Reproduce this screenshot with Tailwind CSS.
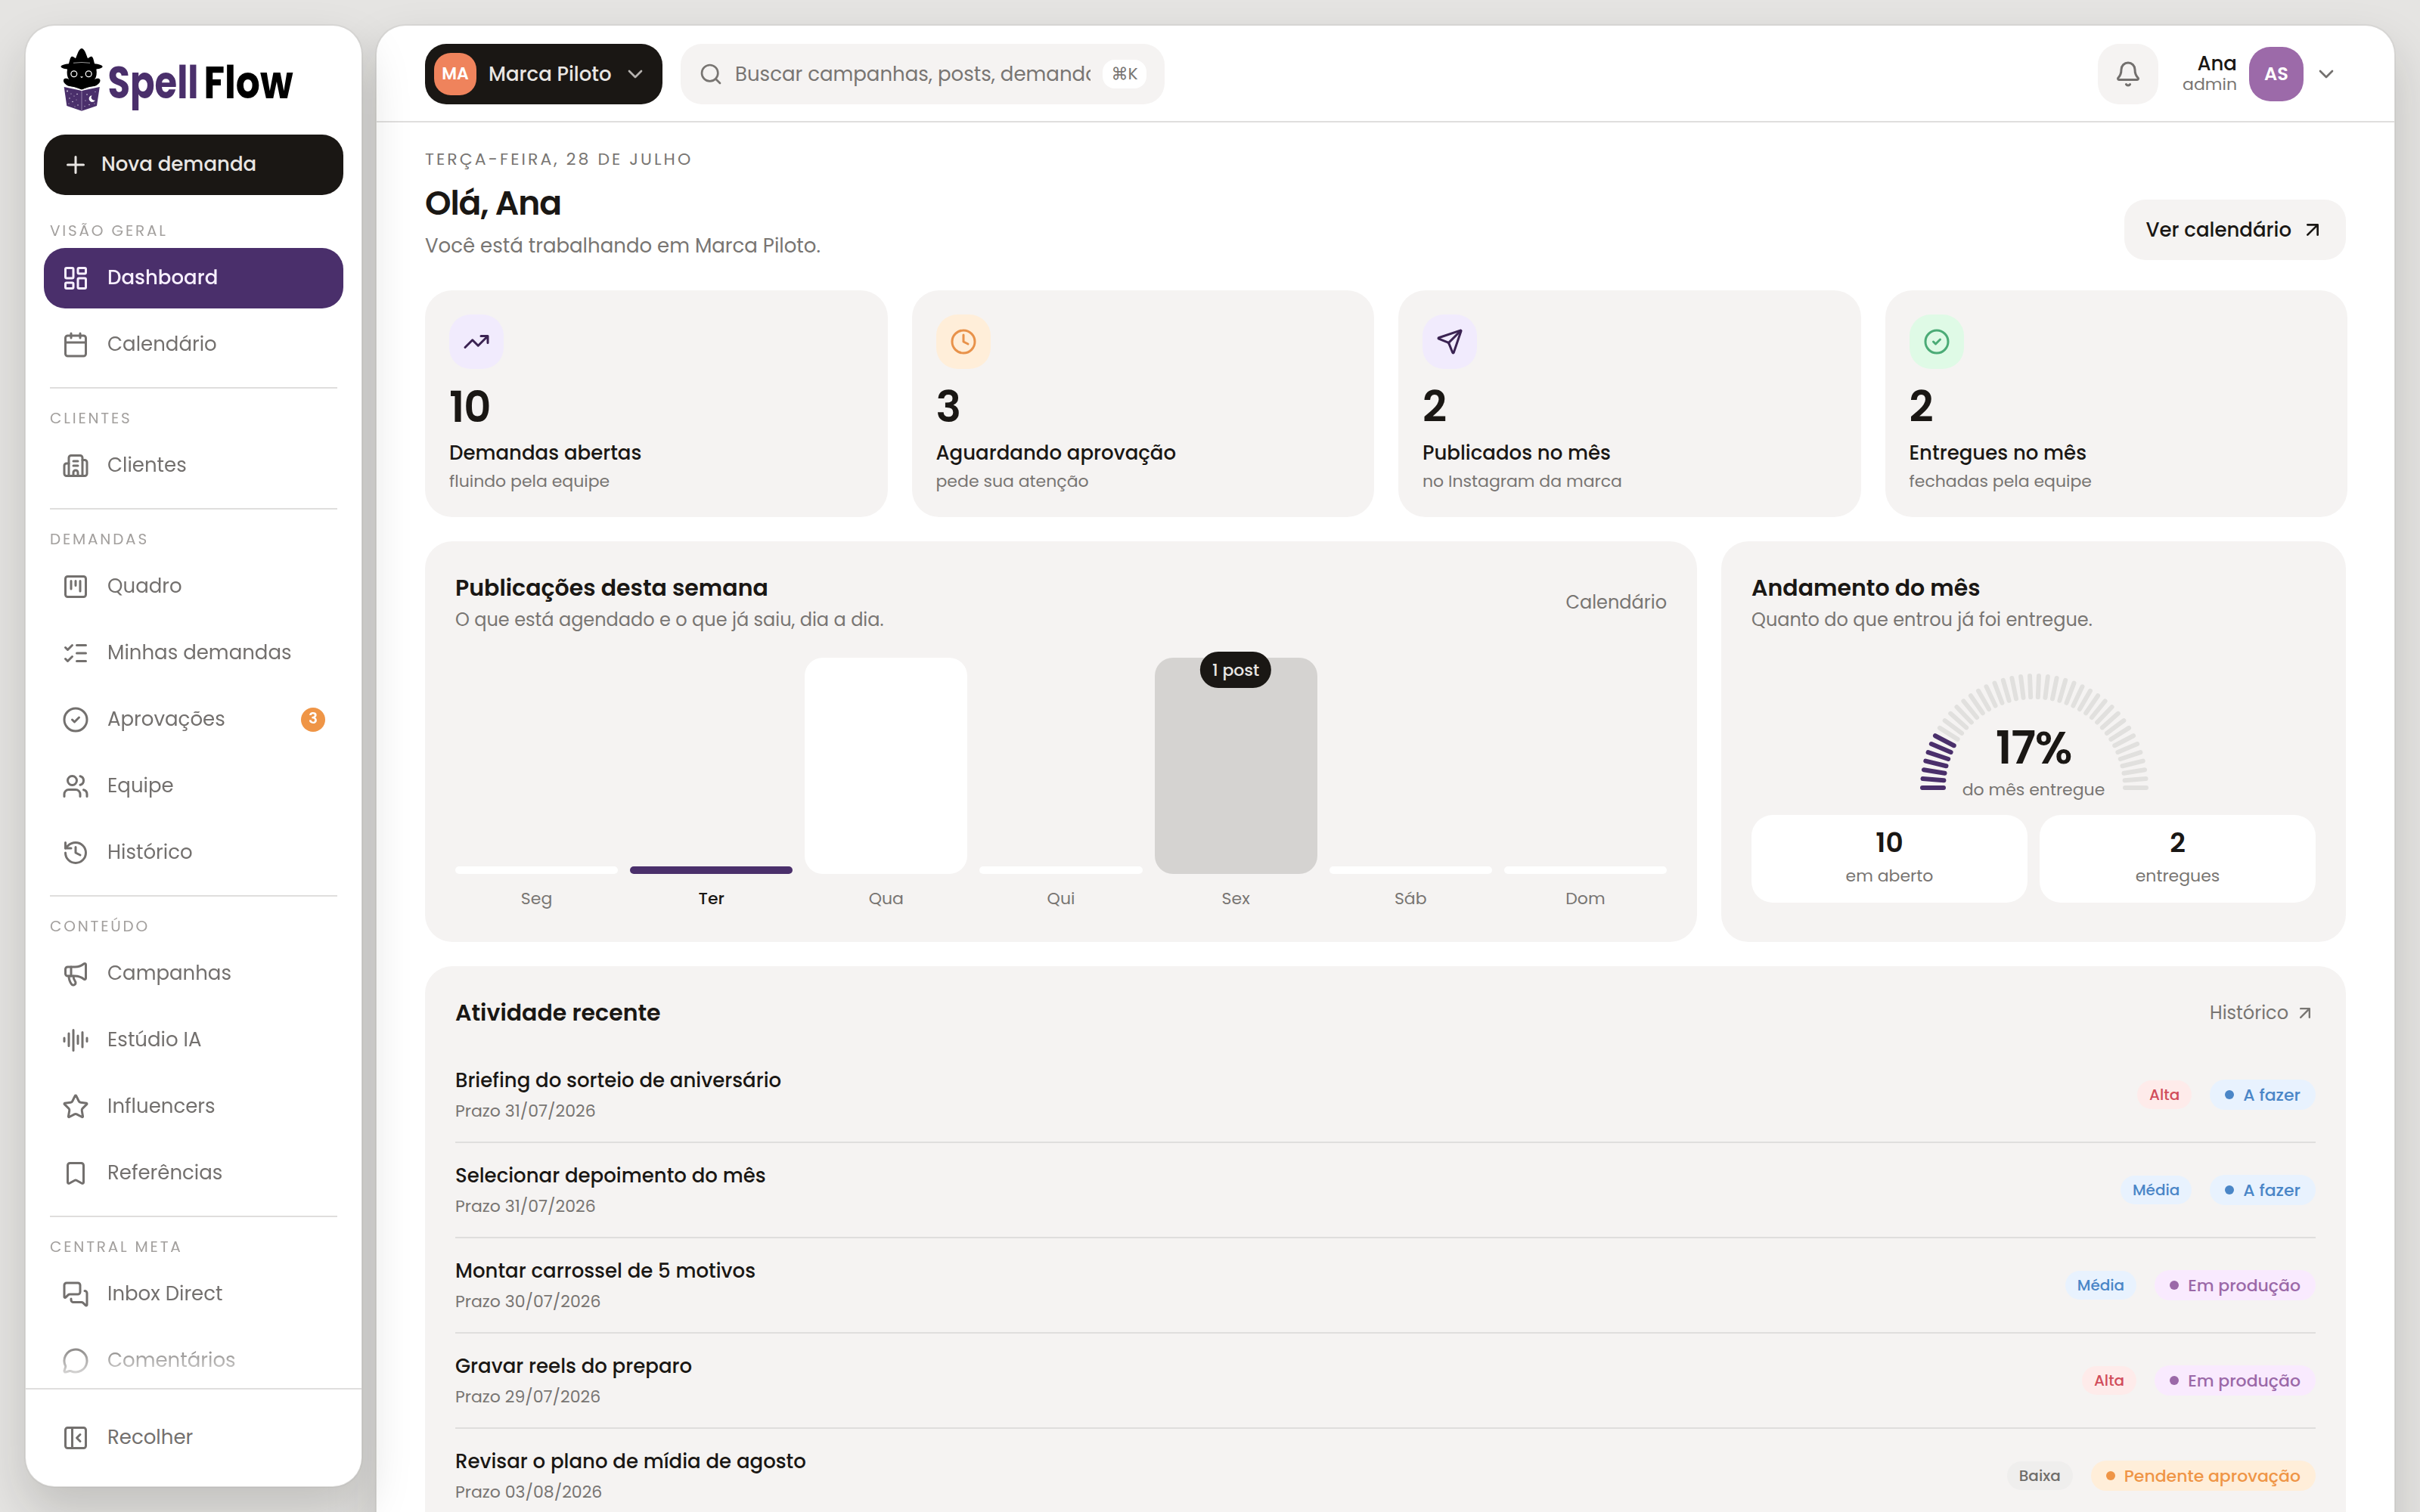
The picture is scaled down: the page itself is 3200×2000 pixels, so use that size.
<!DOCTYPE html>
<html lang="pt-BR">
<head>
    <meta charset="UTF-8">
    <meta name="viewport" content="width=device-width, initial-scale=1.0">
    <title>Spell Flow - Dashboard</title>
    <script src="https://cdn.jsdelivr.net/npm/@tailwindcss/browser@4"></script>
    <style>
        body { font-family: Poppins, Inter, sans-serif; }
        svg.icon { fill: none; stroke: currentColor; stroke-width: 2; stroke-linecap: round; stroke-linejoin: round; flex-shrink: 0; }
        /* labels sit a pixel above the icon centre */
        aside a, aside button { padding-bottom: 2px; }
        aside a svg.icon, aside button svg.icon { margin-top: 2px; }
    </style>
</head>
<body class="bg-[#e5e4e2] text-[#1a1714] text-[26px] leading-[39px] h-[2000px] overflow-hidden">
<div class="flex gap-4 h-[2000px] px-8 pt-8 overflow-hidden">

    <!-- Sidebar -->
    <aside class="relative z-10 w-[448px] h-[1936px] shrink-0 flex flex-col bg-white bg-clip-padding border-2 border-[#1a1714]/5 rounded-[40px] overflow-hidden shadow-[0_32px_64px_rgba(26,23,20,0.17)]">
        <div class="px-6 pt-[26px] shrink-0">
            <svg class="block ml-5 h-[94px] w-[340px]" viewBox="78 60 340 94">
                <path d="M80.500 88c0-1.800 5-3.300 10.500-3.800 1-3.500 1.800-8 3.400-9.300 1.800-1 4 1 5.600 2.300 1.900-3.700 4-13 8-13.200 4.200.2 6.300 9.500 8.100 13.200 1.700-1.300 3.800-3.300 5.600-2.300 1.700 1.300 2.400 5.800 3.400 9.300 5.500.5 10.500 2 10.500 3.800 0 2-4 3-8.200 3.600.9 5.600.3 10.400-2.400 13.600 2.600-1.600 5.800-2 7.100-.2 1.900 3.400-3.100 8.100-8.100 9.500-5.200 1.600-10.500 2-15.800 4.300-5.300-2.300-10.600-2.700-15.800-4.300-5-1.400-10-6.100-8.100-9.500 1.300-1.800 4.500-1.400 7.100.2-2.700-3.200-3.300-8-2.400-13.600-4.300-.6-8.500-1.600-8.500-3.600z" fill="#000"/>
                <path d="M97 83.300q11-1.600 22 0" stroke="#999" stroke-width="1" fill="none"/>
                <circle cx="97.800" cy="97.700" r="3.900" fill="none" stroke="#fff" stroke-width="1.300"/>
                <circle cx="117.200" cy="97.700" r="3.900" fill="none" stroke="#fff" stroke-width="1.300"/>
                <path d="M106 101.300h4l-2 1.900z" fill="#fff"/>
                <path d="M84.700 115l23.300 5 23.800-5-3.800 25-20 6.800-19.700-6.800z" fill="#4a2f6b"/>
                <path d="M86 114.300q14 .5 22 5.200 8-4.700 22-5.200" fill="none" stroke="#fff" stroke-width="1.100"/>
                <path d="M108 120v26.500" stroke="#9d8ab3" stroke-width=".9"/>
                <path d="M121.500 126.300a4.300 4.300 0 1 0 4.300 6.200 4 4 0 0 1-4.300-6.200z" fill="#fff"/>
                <g fill="#e3dcec">
                    <circle cx="89" cy="120.500" r=".9"/><circle cx="94" cy="124" r=".6"/><circle cx="92" cy="130" r=".7"/><circle cx="98" cy="127" r=".6"/>
                    <circle cx="102" cy="124.500" r=".8"/><circle cx="96" cy="134.500" r=".8"/><circle cx="101" cy="132" r=".5"/><circle cx="103" cy="139" r=".7"/>
                    <circle cx="91" cy="137" r=".6"/><circle cx="115" cy="125" r=".8"/><circle cx="113" cy="133" r=".6"/><circle cx="118" cy="138.500" r=".7"/>
                    <circle cx="125" cy="137" r=".6"/><circle cx="126" cy="121.500" r=".6"/><circle cx="112" cy="140.500" r=".6"/><circle cx="99" cy="141" r=".5"/>
                </g>
                <g font-family="Poppins, Inter, sans-serif" font-weight="700" font-size="59">
                    <text x="142.500" y="130" textLength="120" lengthAdjust="spacingAndGlyphs" fill="#4a2f6b">Spell</text>
                    <text x="269.500" y="130" textLength="118" lengthAdjust="spacingAndGlyphs" fill="#000">Flow</text>
                </g>
            </svg>
            <button class="mt-[24px] flex items-center gap-4 w-full h-20 px-6 rounded-[28px] bg-[#1a1714] text-[#e9e6e3] font-medium">
                <svg class="icon size-9" viewBox="0 0 24 24"><path d="M5 12h14M12 5v14"/></svg>
                <span>Nova demanda</span>
            </button>
        </div>

        <nav class="flex-1 min-h-0 overflow-hidden px-6 pt-8 text-[#73706e] [mask-image:linear-gradient(to_bottom,black_calc(100%-64px),transparent)]">
            <p class="px-2 pb-2 text-[20px] leading-[30px] tracking-[0.14em] text-[#a3a09e]">VISÃO GERAL</p>
            <div class="flex flex-col gap-2">
                <a class="flex items-center gap-6 h-20 px-6 rounded-[28px] bg-[#4a2f6b] text-[#f7effe] font-medium">
                    <svg class="icon size-9" viewBox="0 0 24 24"><rect width="7" height="9" x="3" y="3" rx="1"/><rect width="7" height="5" x="14" y="3" rx="1"/><rect width="7" height="9" x="14" y="12" rx="1"/><rect width="7" height="5" x="3" y="16" rx="1"/></svg>
                    Dashboard
                </a>
                <a class="flex items-center gap-6 h-20 px-6">
                    <svg class="icon size-9" viewBox="0 0 24 24"><path d="M8 2v4M16 2v4M3 10h18"/><rect width="18" height="18" x="3" y="4" rx="2"/></svg>
                    Calendário
                </a>
            </div>

            <div class="mx-2 mt-4 mb-6 h-0.5 bg-[#dfdedd]"></div>
            <p class="px-2 pb-2 text-[20px] leading-[30px] tracking-[0.14em] text-[#a3a09e]">CLIENTES</p>
            <a class="flex items-center gap-6 h-20 px-6">
                <svg class="icon size-9" viewBox="0 0 24 24"><path d="M10 12h4M10 8h4M14 21v-3a2 2 0 0 0-4 0v3M6 10H4a2 2 0 0 0-2 2v7a2 2 0 0 0 2 2h16a2 2 0 0 0 2-2V9a2 2 0 0 0-2-2h-2"/><path d="M6 21V5a2 2 0 0 1 2-2h8a2 2 0 0 1 2 2v16"/></svg>
                Clientes
            </a>

            <div class="mx-2 mt-4 mb-6 h-0.5 bg-[#dfdedd]"></div>
            <p class="px-2 pb-2 text-[20px] leading-[30px] tracking-[0.14em] text-[#a3a09e]">DEMANDAS</p>
            <div class="flex flex-col gap-2">
                <a class="flex items-center gap-6 h-20 px-6">
                    <svg class="icon size-9" viewBox="0 0 24 24"><rect width="18" height="18" x="3" y="3" rx="2"/><path d="M8 7v7M12 7v4M16 7v9"/></svg>
                    Quadro
                </a>
                <a class="flex items-center gap-6 h-20 px-6">
                    <svg class="icon size-9" viewBox="0 0 24 24"><path d="M13 5h8M13 12h8M13 19h8M3 17l2 2 4-4M3 7l2 2 4-4"/></svg>
                    Minhas demandas
                </a>
                <a class="flex items-center gap-6 h-20 px-6">
                    <svg class="icon size-9" viewBox="0 0 24 24"><circle cx="12" cy="12" r="10"/><path d="m9 12 2 2 4-4"/></svg>
                    Aprovações
                    <span class="ml-auto mt-0.5 size-8 rounded-full bg-[#ef9546] text-white text-[20px] leading-[29px] font-semibold text-center">3</span>
                </a>
                <a class="flex items-center gap-6 h-20 px-6">
                    <svg class="icon size-9" viewBox="0 0 24 24"><path d="M16 21v-2a4 4 0 0 0-4-4H6a4 4 0 0 0-4 4v2M22 21v-2a4 4 0 0 0-3-3.870M16 3.130a4 4 0 0 1 0 7.750"/><circle cx="9" cy="7" r="4"/></svg>
                    Equipe
                </a>
                <a class="flex items-center gap-6 h-20 px-6">
                    <svg class="icon size-9" viewBox="0 0 24 24"><path d="M3 12a9 9 0 1 0 9-9 9.750 9.750 0 0 0-6.740 2.740L3 8"/><path d="M3 3v5h5M12 7v5l4 2"/></svg>
                    Histórico
                </a>
            </div>

            <div class="mx-2 mt-4 mb-6 h-0.5 bg-[#dfdedd]"></div>
            <p class="px-2 pb-2 text-[20px] leading-[30px] tracking-[0.14em] text-[#a3a09e]">CONTEÚDO</p>
            <div class="flex flex-col gap-2">
                <a class="flex items-center gap-6 h-20 px-6">
                    <svg class="icon size-9" viewBox="0 0 24 24"><path d="M11 6a13 13 0 0 0 8.400-2.800A1 1 0 0 1 21 4v12a1 1 0 0 1-1.600.8A13 13 0 0 0 11 14H5a2 2 0 0 1-2-2V8a2 2 0 0 1 2-2z"/><path d="M6 14a12 12 0 0 0 2.400 7.200 2 2 0 0 0 3.200-2.400A8 8 0 0 1 10 14M8 6v8"/></svg>
                    Campanhas
                </a>
                <a class="flex items-center gap-6 h-20 px-6">
                    <svg class="icon size-9" viewBox="0 0 24 24"><path d="M2 10v3M6 6v11M10 3v18M14 8v7M18 5v13M22 10v3"/></svg>
                    Estúdio IA
                </a>
                <a class="flex items-center gap-6 h-20 px-6">
                    <svg class="icon size-9" viewBox="0 0 24 24"><path d="M11.525 2.295a.53.53 0 0 1 .95 0l2.310 4.679a2.123 2.123 0 0 0 1.595 1.160l5.166.756a.53.53 0 0 1 .294.904l-3.736 3.638a2.123 2.123 0 0 0-.611 1.878l.882 5.140a.53.53 0 0 1-.771.560l-4.618-2.428a2.122 2.122 0 0 0-1.973 0L6.396 21.010a.53.53 0 0 1-.770-.560l.881-5.139a2.122 2.122 0 0 0-.611-1.879L2.160 9.795a.53.53 0 0 1 .294-.906l5.165-.755a2.122 2.122 0 0 0 1.597-1.160z"/></svg>
                    Influencers
                </a>
                <a class="flex items-center gap-6 h-20 px-6">
                    <svg class="icon size-9" viewBox="0 0 24 24"><path d="M17 3a2 2 0 0 1 2 2v15a1 1 0 0 1-1.496.868l-4.512-2.578a2 2 0 0 0-1.984 0l-4.512 2.578A1 1 0 0 1 5 20V5a2 2 0 0 1 2-2z"/></svg>
                    Referências
                </a>
            </div>

            <div class="mx-2 mt-4 mb-6 h-0.5 bg-[#dfdedd]"></div>
            <p class="px-2 pb-2 text-[20px] leading-[30px] tracking-[0.14em] text-[#a3a09e]">CENTRAL META</p>
            <div class="flex flex-col gap-2">
                <a class="flex items-center gap-6 h-20 px-6">
                    <svg class="icon size-9" viewBox="0 0 24 24"><path d="M16 10a2 2 0 0 1-2 2H6.828a2 2 0 0 0-1.414.586l-2.202 2.202A.71.71 0 0 1 2 14.286V4a2 2 0 0 1 2-2h10a2 2 0 0 1 2 2z"/><path d="M20 9a2 2 0 0 1 2 2v10.286a.71.71 0 0 1-1.212.502l-2.202-2.202A2 2 0 0 0 17.172 19H10a2 2 0 0 1-2-2v-1"/></svg>
                    Inbox Direct
                </a>
                <a class="flex items-center gap-6 h-20 px-6">
                    <svg class="icon size-9" viewBox="0 0 24 24"><path d="M2.992 16.342a2 2 0 0 1 .094 1.167l-1.065 3.290a1 1 0 0 0 1.236 1.168l3.413-.998a2 2 0 0 1 1.099.092 10 10 0 1 0-4.777-4.719"/></svg>
                    Comentários
                </a>
            </div>
        </nav>

        <div class="shrink-0 border-t-2 border-[#dfdedd] p-6 text-[#73706e]">
            <a class="flex items-center gap-6 h-20 px-6">
                <svg class="icon size-9" viewBox="0 0 24 24"><rect width="18" height="18" x="3" y="3" rx="2"/><path d="M9 3v18M16 15l-3-3 3-3"/></svg>
                Recolher
            </a>
        </div>
    </aside>

    <!-- Main Content -->
    <main class="flex-1 min-w-0 h-[2100px] bg-white bg-clip-padding border-2 border-[#1a1714]/5 rounded-[40px] overflow-hidden shadow-[0_32px_64px_rgba(26,23,20,0.17)]">
        <!-- Top bar -->
        <header class="flex items-start h-32 px-16 pt-6 border-b-2 border-[#dfdedd]">
            <button class="flex items-center h-20 w-[314px] pl-3 pr-5 rounded-[28px] bg-[#1a1714] text-[#e9e6e3] font-medium">
                <span class="size-14 rounded-[22px] bg-[#ef835c] text-white text-[22px] leading-[56px] font-semibold text-center">MA</span>
                <span class="ml-4">Marca Piloto</span>
                <svg class="icon size-8 ml-auto text-[#b5b2af]" viewBox="0 0 24 24"><path d="m6 9 6 6 6-6"/></svg>
            </button>
            <label class="ml-6 flex items-center gap-4 h-20 w-[640px] px-6 rounded-[28px] bg-[#f5f3f2] text-[#787572]">
                <svg class="icon size-8" viewBox="0 0 24 24"><path d="m21 21-4.340-4.340"/><circle cx="11" cy="11" r="8"/></svg>
                <input class="flex-1 min-w-0 outline-none placeholder:text-[#787572]" placeholder="Buscar campanhas, posts, demandas">
                <kbd class="h-[38px] w-[58px] rounded-2xl bg-white text-[22px] leading-[38px] text-center font-[Poppins,Inter,sans-serif]">⌘K</kbd>
            </label>
            <div class="ml-auto flex items-center h-20">
                <button class="flex items-center justify-center size-20 rounded-[28px] bg-[#f5f3f2] text-[#73706e]">
                    <svg class="icon size-9" viewBox="0 0 24 24"><path d="M10.268 21a2 2 0 0 0 3.464 0"/><path d="M3.262 15.326A1 1 0 0 0 4 17h16a1 1 0 0 0 .74-1.673C19.410 13.956 18 12.499 18 8A6 6 0 0 0 6 8c0 4.499-1.411 5.956-2.738 7.326"/></svg>
                </button>
                <div class="ml-8 text-right leading-7">
                    <p class="font-medium">Ana</p>
                    <p class="text-[22px] leading-7 text-[#787572]">admin</p>
                </div>
                <span class="ml-4 size-[72px] rounded-[28px] bg-[#9c6aa9] text-white text-[24px] leading-[72px] font-semibold text-center">AS</span>
                <svg class="icon size-8 ml-3.5 mr-2.5 text-[#73706e]" viewBox="0 0 24 24"><path d="m6 9 6 6 6-6"/></svg>
            </div>
        </header>

        <div class="px-16 pt-[33px]">
            <!-- Greeting -->
            <div class="flex items-end justify-between">
                <div>
                    <p class="text-[22px] leading-8 tracking-[0.14em] text-[#787572]">TERÇA-FEIRA, 28 DE JULHO</p>
                    <h1 class="mt-3.5 text-[44px] leading-[56px] font-semibold tracking-[-0.025em]">Olá, Ana</h1>
                    <p class="mt-[9px] leading-[38px] text-[#787572]">Você está trabalhando em Marca Piloto.</p>
                </div>
                <a class="flex items-center gap-3 h-20 px-7 rounded-[28px] bg-[#f5f3f2] font-medium">
                    Ver calendário
                    <svg class="icon size-8" viewBox="0 0 24 24"><path d="M7 7h10v10M7 17 17 7"/></svg>
                </a>
            </div>

            <!-- Stat cards -->
            <div class="mt-10 -mr-0.5 grid grid-cols-4 gap-8">
                <div class="h-[300px] p-8 rounded-[36px] bg-[#f5f3f2]">
                    <div class="flex items-center justify-center size-[72px] rounded-[28px] bg-[#f1ebfd] text-[#3b2352]">
                        <svg class="icon size-9" viewBox="0 0 24 24"><path d="M16 7h6v6M22 7l-8.500 8.500-5-5L2 17"/></svg>
                    </div>
                    <p class="mt-[21px] text-[56px] leading-[60px] font-semibold tracking-[-0.02em]">10</p>
                    <p class="mt-[11px] leading-[38px] font-medium">Demandas abertas</p>
                    <p class="mt-0.5 text-[22px] leading-[33px] text-[#787572]">fluindo pela equipe</p>
                </div>
                <div class="h-[300px] p-8 rounded-[36px] bg-[#f5f3f2]">
                    <div class="flex items-center justify-center size-[72px] rounded-[28px] bg-[#ffeed9] text-[#e8924a]">
                        <svg class="icon size-9" viewBox="0 0 24 24"><circle cx="12" cy="12" r="10"/><path d="M12 6v6l4 2"/></svg>
                    </div>
                    <p class="mt-[21px] text-[56px] leading-[60px] font-semibold tracking-[-0.02em]">3</p>
                    <p class="mt-[11px] leading-[38px] font-medium">Aguardando aprovação</p>
                    <p class="mt-0.5 text-[22px] leading-[33px] text-[#787572]">pede sua atenção</p>
                </div>
                <div class="h-[300px] p-8 rounded-[36px] bg-[#f5f3f2]">
                    <div class="flex items-center justify-center size-[72px] rounded-[28px] bg-[#f1ebfd] text-[#3b2352]">
                        <svg class="icon size-9" viewBox="0 0 24 24"><path d="M14.536 21.686a.5.5 0 0 0 .937-.024l6.500-19a.496.496 0 0 0-.635-.635l-19 6.500a.5.5 0 0 0-.024.937l7.930 3.180a2 2 0 0 1 1.112 1.110z"/><path d="m21.854 2.147-10.940 10.939"/></svg>
                    </div>
                    <p class="mt-[21px] text-[56px] leading-[60px] font-semibold tracking-[-0.02em]">2</p>
                    <p class="mt-[11px] leading-[38px] font-medium">Publicados no mês</p>
                    <p class="mt-0.5 text-[22px] leading-[33px] text-[#787572]">no Instagram da marca</p>
                </div>
                <div class="h-[300px] p-8 rounded-[36px] bg-[#f5f3f2]">
                    <div class="flex items-center justify-center size-[72px] rounded-[28px] bg-[#dffae6] text-[#4bab76]">
                        <svg class="icon size-9" viewBox="0 0 24 24"><circle cx="12" cy="12" r="10"/><path d="m9 12 2 2 4-4"/></svg>
                    </div>
                    <p class="mt-[21px] text-[56px] leading-[60px] font-semibold tracking-[-0.02em]">2</p>
                    <p class="mt-[11px] leading-[38px] font-medium">Entregues no mês</p>
                    <p class="mt-0.5 text-[22px] leading-[33px] text-[#787572]">fechadas pela equipe</p>
                </div>
            </div>

            <div class="mt-8 flex gap-8 h-[530px]">
                <!-- Week chart -->
                <section class="flex-1 p-10 rounded-[36px] bg-[#f5f3f2]">
                    <div class="flex items-center justify-between">
                        <div>
                            <h2 class="text-[30px] leading-[44px] font-semibold">Publicações desta semana</h2>
                            <p class="mt-0.5 text-[24px] leading-9 text-[#787572]">O que está agendado e o que já saiu, dia a dia.</p>
                        </div>
                        <a class="text-[24px] leading-9 text-[#787572]">Calendário</a>
                    </div>
                    <div class="mt-8 grid grid-cols-7 gap-4 h-[286px] items-end">
                        <div class="h-2.5 rounded-[5px] bg-white"></div>
                        <div class="h-2.5 rounded-[5px] bg-[#4a2f6b]"></div>
                        <div class="h-full rounded-[24px] bg-white"></div>
                        <div class="h-2.5 rounded-[5px] bg-white"></div>
                        <div class="relative h-full rounded-[24px] bg-[#d5d3d1]">
                            <span class="absolute -top-2 left-1/2 -translate-x-1/2 h-12 px-4 rounded-full bg-[#1a1714] text-[#e9e6e3] text-[22px] leading-[49px] font-medium whitespace-nowrap">1 post</span>
                        </div>
                        <div class="h-2.5 rounded-[5px] bg-white"></div>
                        <div class="h-2.5 rounded-[5px] bg-white"></div>
                    </div>
                    <div class="mt-4 grid grid-cols-7 gap-4 text-center text-[22px] leading-[33px] text-[#787572]">
                        <span>Seg</span>
                        <span class="font-medium text-[#1a1714]">Ter</span>
                        <span>Qua</span>
                        <span>Qui</span>
                        <span>Sex</span>
                        <span>Sáb</span>
                        <span>Dom</span>
                    </div>
                </section>

                <!-- Month progress -->
                <section class="w-[826px] p-10 rounded-[36px] bg-[#f5f3f2]">
                    <h2 class="text-[30px] leading-[44px] font-semibold">Andamento do mês</h2>
                    <p class="mt-0.5 text-[24px] leading-9 text-[#787572]">Quanto do que entrou já foi entregue.</p>
                    <div class="mt-8 grid h-[192px] justify-items-center">
                        <svg id="gauge" class="col-start-1 row-start-1 w-80 h-[192px]" viewBox="0 0 320 192" stroke-width="6" stroke-linecap="round"></svg>
                        <div class="col-start-1 row-start-1 self-end pb-px text-center">
                            <p class="text-[60px] leading-[60px] font-semibold tracking-[-0.02em]">17%</p>
                            <p class="mt-[9px] text-[22px] leading-[33px] text-[#787572]">do mês entregue</p>
                        </div>
                    </div>
                    <div class="mt-4 grid grid-cols-2 gap-4 text-center">
                        <div class="h-[116px] pt-4 rounded-[28px] bg-white">
                            <p class="text-[36px] leading-[42px] font-semibold">10</p>
                            <p class="mt-1.5 text-[22px] leading-[33px] text-[#787572]">em aberto</p>
                        </div>
                        <div class="h-[116px] pt-4 rounded-[28px] bg-white">
                            <p class="text-[36px] leading-[42px] font-semibold">2</p>
                            <p class="mt-1.5 text-[22px] leading-[33px] text-[#787572]">entregues</p>
                        </div>
                    </div>
                </section>
            </div>

            <!-- Recent activity -->
            <section class="mt-8 p-10 rounded-[36px] bg-[#f5f3f2]">
                <div class="flex items-center justify-between">
                    <h2 class="text-[30px] leading-[44px] font-semibold">Atividade recente</h2>
                    <a class="flex items-center gap-2 text-[24px] leading-9 text-[#787572]">
                        Histórico
                        <svg class="icon size-7" viewBox="0 0 24 24"><path d="M7 7h10v10M7 17 17 7"/></svg>
                    </a>
                </div>
                <ul class="mt-6">
                    <li class="flex items-center h-[126px] border-b-2 border-[#dfdedd]">
                        <div class="mr-auto">
                            <p class="font-medium">Briefing do sorteio de aniversário</p>
                            <p class="mt-1 text-[22px] leading-[33px] text-[#787572]">Prazo 31/07/2026</p>
                        </div>
                        <span class="mr-6 px-4 rounded-full bg-[#feebea] text-[#d14d5b] text-[20px] leading-[38px] font-medium">Alta</span>
                        <span class="flex items-center gap-3 h-10 px-5 rounded-full bg-[#e8f2fe] text-[#4a86c7] text-[22px] font-medium"><i class="size-3 rounded-full bg-current"></i>A fazer</span>
                    </li>
                    <li class="flex items-center h-[126px] border-b-2 border-[#dfdedd]">
                        <div class="mr-auto">
                            <p class="font-medium">Selecionar depoimento do mês</p>
                            <p class="mt-1 text-[22px] leading-[33px] text-[#787572]">Prazo 31/07/2026</p>
                        </div>
                        <span class="mr-6 px-4 rounded-full bg-[#e8f2fe] text-[#4a86c7] text-[20px] leading-[38px] font-medium">Média</span>
                        <span class="flex items-center gap-3 h-10 px-5 rounded-full bg-[#e8f2fe] text-[#4a86c7] text-[22px] font-medium"><i class="size-3 rounded-full bg-current"></i>A fazer</span>
                    </li>
                    <li class="flex items-center h-[126px] border-b-2 border-[#dfdedd]">
                        <div class="mr-auto">
                            <p class="font-medium">Montar carrossel de 5 motivos</p>
                            <p class="mt-1 text-[22px] leading-[33px] text-[#787572]">Prazo 30/07/2026</p>
                        </div>
                        <span class="mr-6 px-4 rounded-full bg-[#e8f2fe] text-[#4a86c7] text-[20px] leading-[38px] font-medium">Média</span>
                        <span class="flex items-center gap-3 h-10 px-5 rounded-full bg-[#f9eafe] text-[#9b69a8] text-[22px] font-medium"><i class="size-3 rounded-full bg-current"></i>Em produção</span>
                    </li>
                    <li class="flex items-center h-[126px] border-b-2 border-[#dfdedd]">
                        <div class="mr-auto">
                            <p class="font-medium">Gravar reels do preparo</p>
                            <p class="mt-1 text-[22px] leading-[33px] text-[#787572]">Prazo 29/07/2026</p>
                        </div>
                        <span class="mr-6 px-4 rounded-full bg-[#feebea] text-[#d14d5b] text-[20px] leading-[38px] font-medium">Alta</span>
                        <span class="flex items-center gap-3 h-10 px-5 rounded-full bg-[#f9eafe] text-[#9b69a8] text-[22px] font-medium"><i class="size-3 rounded-full bg-current"></i>Em produção</span>
                    </li>
                    <li class="flex items-center h-[126px] border-b-2 border-[#dfdedd]">
                        <div class="mr-auto">
                            <p class="font-medium">Revisar o plano de mídia de agosto</p>
                            <p class="mt-1 text-[22px] leading-[33px] text-[#787572]">Prazo 03/08/2026</p>
                        </div>
                        <span class="mr-6 px-4 rounded-full bg-[#efeeed] text-[#6f6d6a] text-[20px] leading-[38px] font-medium">Baixa</span>
                        <span class="flex items-center gap-3 h-10 px-5 rounded-full bg-[#ffeed9] text-[#ef9546] text-[22px] font-medium"><i class="size-3 rounded-full bg-current"></i>Pendente aprovação</span>
                    </li>
                </ul>
            </section>
        </div>
    </main>
</div>

<script>
    // Gauge: 40 ticks over a half circle, filled up to the delivered percentage
    const TICKS = 40;
    const percent = 17;
    const filled = Math.round(TICKS * percent / 100);
    let lines = '';
    for (let i = 0; i < TICKS; i++) {
        const a = Math.PI - (Math.PI * i) / (TICKS - 1);
        const cos = Math.cos(a), sin = Math.sin(a);
        const color = i < filled ? '#4a2f6b' : '#e1e0de';
        lines += `<line x1="${161 + 120 * cos}" y1="${172 - 120 * sin}" x2="${161 + 148 * cos}" y2="${172 - 148 * sin}" stroke="${color}"/>`;
    }
    document.getElementById('gauge').innerHTML = lines;
</script>
</body>
</html>
